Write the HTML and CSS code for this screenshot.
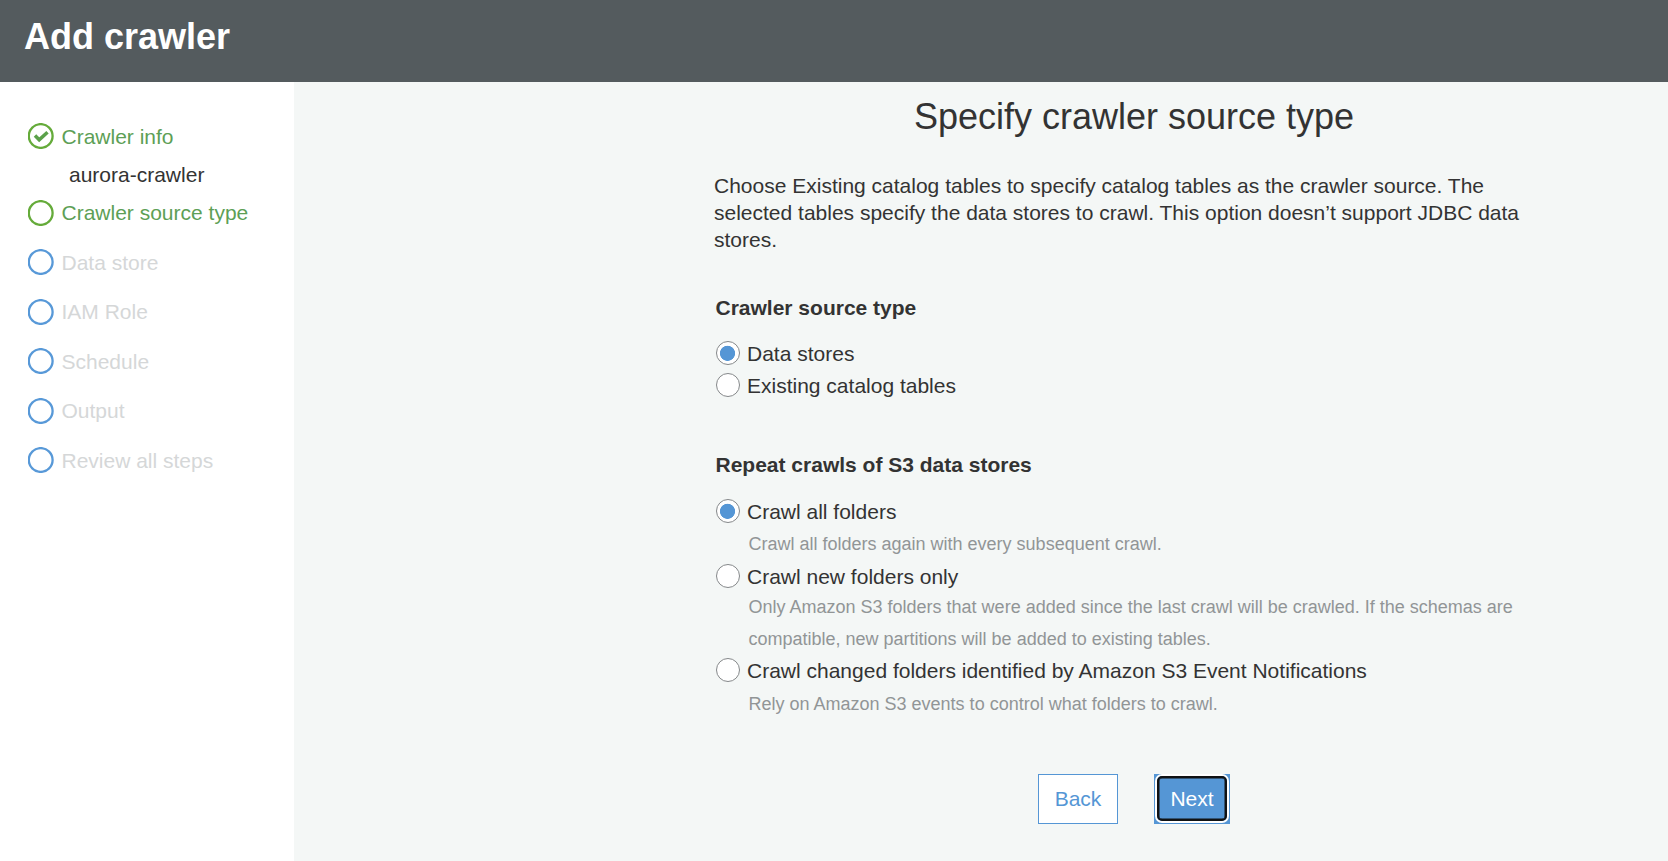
FILE: index.html
```html
<!DOCTYPE html>
<html lang="en">
<head>
<meta charset="utf-8">
<title>Add crawler</title>
<link rel="stylesheet" href="styles.css">
</head>
<body>
<header class="header"><h1 class="header-title">Add crawler</h1></header>
<div class="layout">
  <nav class="sidebar">
    <ul class="steps">
      <li class="step done"><svg class="step-icon" viewBox="0 0 26 26"><circle cx="12.7" cy="13" r="11.9"/><path class="check" d="M7 12.6l4.2 4.2 8.3-7.6"/></svg><span>Crawler info</span></li>
      <li class="step-value">aurora-crawler</li>
      <li class="step current"><svg class="step-icon" viewBox="0 0 26 26"><circle cx="12.7" cy="13" r="11.9"/></svg><span>Crawler source type</span></li>
      <li class="step"><svg class="step-icon" viewBox="0 0 26 26"><circle cx="12.7" cy="13" r="11.9"/></svg><span>Data store</span></li>
      <li class="step"><svg class="step-icon" viewBox="0 0 26 26"><circle cx="12.7" cy="13" r="11.9"/></svg><span>IAM Role</span></li>
      <li class="step"><svg class="step-icon" viewBox="0 0 26 26"><circle cx="12.7" cy="13" r="11.9"/></svg><span>Schedule</span></li>
      <li class="step"><svg class="step-icon" viewBox="0 0 26 26"><circle cx="12.7" cy="13" r="11.9"/></svg><span>Output</span></li>
      <li class="step"><svg class="step-icon" viewBox="0 0 26 26"><circle cx="12.7" cy="13" r="11.9"/></svg><span>Review all steps</span></li>
    </ul>
  </nav>
  <main class="main">
    <form class="form">
      <h2 class="form-title">Specify crawler source type</h2>
      <p class="intro">Choose Existing catalog tables to specify catalog tables as the crawler source. The<br>selected tables specify the data stores to crawl. This option doesn’t support JDBC data<br>stores.</p>
      <section class="group">
        <h3 class="group-title">Crawler source type</h3>
        <label class="option"><input class="radio" type="radio" name="source" checked><span>Data stores</span></label>
        <label class="option"><input class="radio" type="radio" name="source"><span>Existing catalog tables</span></label>
      </section>
      <section class="group repeat">
        <h3 class="group-title">Repeat crawls of S3 data stores</h3>
        <label class="option"><input class="radio" type="radio" name="repeat" checked><span>Crawl all folders</span></label>
        <p class="help">Crawl all folders again with every subsequent crawl.</p>
        <label class="option"><input class="radio" type="radio" name="repeat"><span>Crawl new folders only</span></label>
        <p class="help help-long">Only Amazon S3 folders that were added since the last crawl will be crawled. If the schemas are<br>compatible, new partitions will be added to existing tables.</p>
        <label class="option"><input class="radio" type="radio" name="repeat"><span>Crawl changed folders identified by Amazon S3 Event Notifications</span></label>
        <p class="help help-last">Rely on Amazon S3 events to control what folders to crawl.</p>
      </section>
      <div class="actions">
        <button class="button" type="button">Back</button>
        <button class="button primary" type="button"><span class="focus-ring">Next</span></button>
      </div>
    </form>
  </main>
</div>
</body>
</html>
```
FILE: styles.css
```css
* { box-sizing: border-box; }
body {
  margin: 0;
  height: 861px;
  display: flex;
  flex-direction: column;
  overflow: hidden;
  font: 21px/27px "Liberation Sans", Arial, sans-serif;
  color: #333;
  background: #f4f7f6;
}
h1, h2, h3, p, ul { margin: 0; padding: 0; }
.header { flex: none; height: 82px; padding: 16px 24px; background: #545b5e; color: #fff; }
.header-title { font-size: 36px; line-height: 41px; }
.layout { flex: 1; display: flex; }
.sidebar { width: 294px; padding: 41px 0 0 28px; background: #fff; }
.steps { list-style: none; }
.step { display: flex; align-items: center; gap: 7.5px; height: 26px; margin-bottom: 23.5px; color: #d5d7d8; white-space: nowrap; }
.step-icon { width: 26px; height: 26px; flex: none; fill: none; stroke: #5899d8; stroke-width: 2.3; }
.done, .current { color: #5d9f56; }
.done { margin-bottom: 12px; }
.current { margin-bottom: 23.1px; }
.current span { padding-bottom: 2px; }
.done .step-icon, .current .step-icon { stroke: #65ab3a; }
.step .check { stroke: #5ba14a; stroke-width: 3.5; }
.step-value { height: 27px; margin-bottom: 12px; padding-left: 41px; }
.main { flex: 1; padding: 14px 0 0 420px; }
.form { width: 840px; }
.form-title { font-size: 36px; line-height: 41px; font-weight: 400; text-align: center; }
.intro { margin-top: 35px; white-space: nowrap; }
.group { margin-top: 41px; padding-left: 2px; }
.repeat { margin-top: 50px; }
.group-title { font-size: 21px; margin-left: -0.5px; margin-bottom: 16px; }
.repeat .group-title { margin-bottom: 17px; }
.option { display: flex; align-items: center; gap: 7px; height: 32px; white-space: nowrap; }
.radio {
  appearance: none;
  width: 24px;
  height: 24px;
  margin: 0;
  border: 1px solid #85888a;
  border-radius: 50%;
  background: #fff;
}
.radio:checked { background: radial-gradient(circle at 10.5px 11.3px, #5596d5 7.2px, #fff 7.9px); }
.help { padding-left: 32.5px; font-size: 18px; line-height: 32px; color: #919596; margin-top: 1px; white-space: nowrap; }
.help-long { margin: -1px 0; }
.help-last { margin-top: 2px; }
.actions { display: flex; justify-content: center; gap: 36px; margin-top: 54px; }
.button { width: 80px; height: 50px; padding: 0 0 2px; border: 1px solid #5596d5; background: #fff; color: #5596d5; font: inherit; }
.primary { width: 76px; padding: 0; background: #5596d5; color: #fff; }
.focus-ring { display: flex; align-items: center; justify-content: center; height: 45px; margin: 0 2px 1px; padding-bottom: 1px; border: 2px solid #101214; border-radius: 5px; box-shadow: 0 0 0 2px #fff, inset 0 0 0 0.5px #101214; }
```
